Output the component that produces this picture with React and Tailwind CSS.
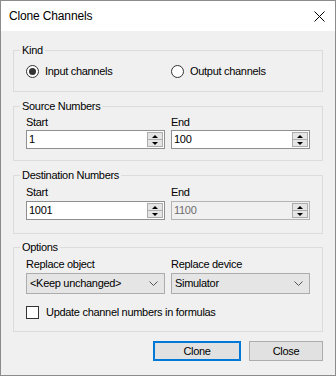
import React from "react";

const font = { fontFamily: '"Liberation Sans", Arial, sans-serif' };

function Group({ title, children, className = "" }) {
  return (
    <fieldset className={"border border-[#dcdcdc] px-[12px] " + className}>
      <legend className="-ml-[6px] px-[2px] h-[16px] leading-[16px]">{title}</legend>
      {children}
    </fieldset>
  );
}

function Spin({ value, disabled }) {
  return (
    <div
      className={
        "h-[19px] border flex items-stretch " +
        (disabled ? "bg-[#f0f0f0] border-[#b4b4b4]" : "bg-white border-[#8f8f8f]")
      }
    >
      <div
        className={
          "flex-1 pl-[2px] leading-[17px] " +
          (disabled ? "text-[#6d6d6d]" : "text-black")
        }
      >
        {value}
      </div>
      <div className="w-[16px] my-[1px] mr-[1px] flex flex-col border border-[#acacac] bg-[#e5e5e5]">
        <div className="flex-1 flex items-center justify-center border-b border-[#acacac]">
          <div className="w-0 h-0 border-l-[3px] border-r-[3px] border-b-[3px] border-l-transparent border-r-transparent border-b-black" />
        </div>
        <div className="flex-1 flex items-center justify-center">
          <div className="w-0 h-0 border-l-[3px] border-r-[3px] border-t-[3px] border-l-transparent border-r-transparent border-t-black" />
        </div>
      </div>
    </div>
  );
}

function Select({ value }) {
  return (
    <div className="h-[21px] border border-[#acacac] bg-[#e5e5e5] flex items-center justify-between pl-[3px] pr-[6px]">
      <span>{value}</span>
      <svg width="9" height="5" viewBox="0 0 9 5">
        <path d="M0.5 0.5 L4.5 4.5 L8.5 0.5" fill="none" stroke="#555" strokeWidth="1" />
      </svg>
    </div>
  );
}

function Radio({ checked, label }) {
  return (
    <div className="flex items-center h-[16px]">
      <div className="w-[13px] h-[13px] rounded-full border border-[#333] bg-white flex items-center justify-center">
        {checked && <div className="w-[7px] h-[7px] rounded-full bg-[#333]" />}
      </div>
      <span className="ml-[6px]">{label}</span>
    </div>
  );
}

export default function App() {
  return (
    <div
      style={font}
      className="w-[336px] h-[376px] border border-[#8c8c8c] bg-[#f0f0f0] flex flex-col text-[11px] tracking-[-0.3px] text-black"
    >
      {/* TITLE */}
      <div className="h-[30px] bg-white flex items-center justify-between pl-[8px] pr-[10px]">
        <span className="text-[12px] tracking-[-0.15px]">Clone Channels</span>
        <svg width="11" height="11" viewBox="0 0 11 11">
          <path d="M0.5 0.5 L10.5 10.5 M10.5 0.5 L0.5 10.5" stroke="#000" strokeWidth="1" />
        </svg>
      </div>

      <div className="flex flex-col px-[12px] pt-[11px]">
        {/* KIND */}
        <Group title="Kind" className="pt-[5px] pb-[12px]">
          <div className="grid grid-cols-2 gap-[6px]">
            <Radio checked label="Input channels" />
            <Radio label="Output channels" />
          </div>
        </Group>

        {/* SOURCE */}
        <Group title="Source Numbers" className="mt-[6px] pb-[11px]">
          <div className="grid grid-cols-2 gap-x-[6px]">
            <div className="leading-[16px]">Start</div>
            <div className="leading-[16px]">End</div>
            <Spin value="1" />
            <Spin value="100" />
          </div>
        </Group>

        {/* DESTINATION */}
        <Group title="Destination Numbers" className="mt-[6px] pb-[13px]">
          <div className="grid grid-cols-2 gap-x-[6px]">
            <div className="leading-[18px]">Start</div>
            <div className="leading-[18px]">End</div>
            <Spin value="1001" />
            <Spin value="1100" disabled />
          </div>
        </Group>

        {/* OPTIONS */}
        <Group title="Options" className="mt-[5px] pb-[11px]">
          <div className="grid grid-cols-2 gap-x-[6px]">
            <div className="leading-[18px]">Replace object</div>
            <div className="leading-[18px]">Replace device</div>
            <Select value="<Keep unchanged>" />
            <Select value="Simulator" />
          </div>
          <div className="flex items-center h-[16px] mt-[10px]">
            <div className="w-[13px] h-[13px] border border-[#333] bg-white" />
            <span className="ml-[7px]">Update channel numbers in formulas</span>
          </div>
        </Group>

        {/* BUTTONS */}
        <div className="flex justify-end gap-[8px] mt-[9px]">
          <button className="w-[88px] h-[20px] border-2 border-[#0078d7] bg-[#e1e1e1]">
            Clone
          </button>
          <button className="w-[74px] h-[20px] border border-[#adadad] bg-[#e1e1e1]">
            Close
          </button>
        </div>
      </div>
    </div>
  );
}
